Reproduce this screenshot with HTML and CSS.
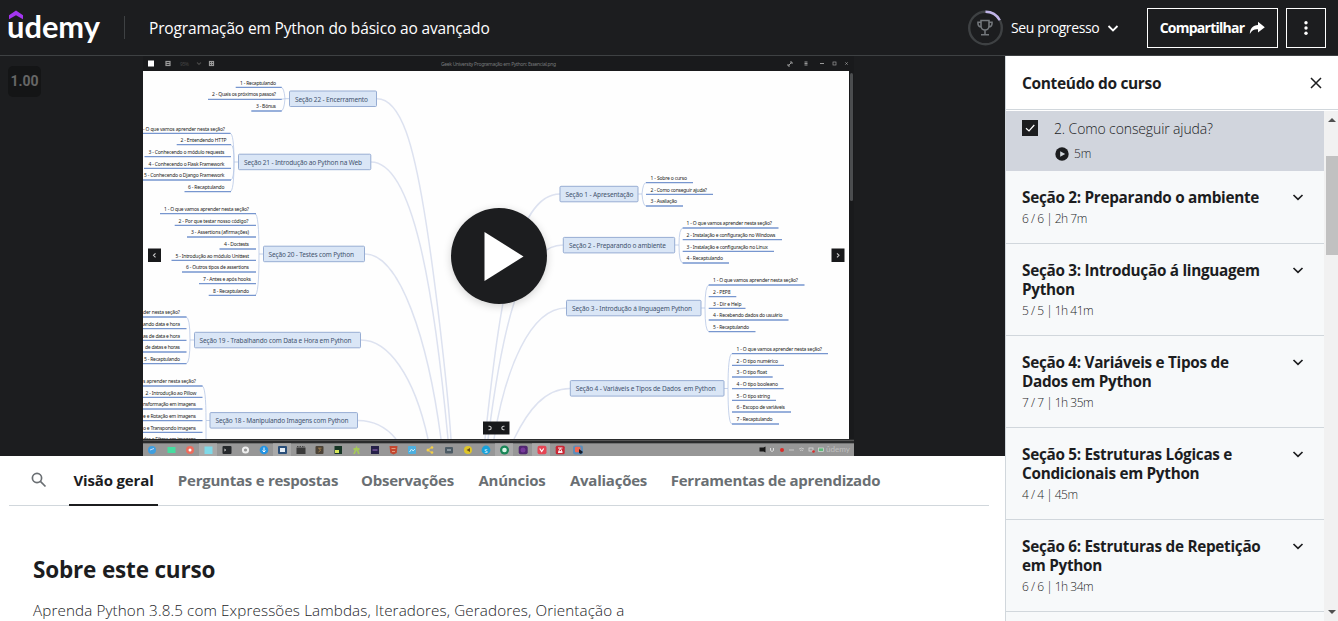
FILE: index.html
```html
<!DOCTYPE html>
<html lang="pt-BR">
<head>
<meta charset="utf-8">
<title>Programação em Python do básico ao avançado</title>
<link rel="stylesheet" href="styles.css">
</head>
<body>
<header class="topbar">
  <svg class="logo" width="94" height="40" viewBox="0 0 94 40" role="img" aria-label="udemy">
    <path d="M1 7.300 8 2.400 15 7.300V11.300L8 7.300 1 11.300Z" fill="#a435f0"/>
    <text x="-1" y="30" textLength="93" lengthAdjust="spacingAndGlyphs" class="wordmark">udemy</text>
  </svg>
  <span class="rule"></span>
  <h1 class="course">Programação em Python do básico ao avançado</h1>
  <div class="progress">
    <svg width="36" height="36" viewBox="0 0 36 36" fill="none">
      <circle cx="17.500" cy="18" r="16.300" stroke="#3e4143" stroke-width="2.400"/>
      <path d="M17.500 1.700A16.300 16.300 0 0 1 31.800 10.200" stroke="#c0b4e8" stroke-width="2.400"/>
      <path d="M13 10.500h8v5.500a4 4 0 0 1-8 0ZM13 12.200h-3v1.600a3.200 3.200 0 0 0 3.300 3.200M21 12.200h3v1.600a3.200 3.200 0 0 1-3.300 3.200M17 20v4.500M13 24.800h8" stroke="#73777b" stroke-width="1.600"/>
    </svg>
    <span class="progress-label">Seu progresso</span>
    <svg width="12" height="12" viewBox="0 0 12 12" fill="none" stroke="#fff" stroke-width="1.800"><path d="M1.500 4 6 8.500 10.500 4"/></svg>
  </div>
  <button class="btn share"><span>Compartilhar</span>
    <svg width="16" height="14" viewBox="0 0 16 14" fill="#fff"><path d="M9 .8 15.800 6.200 9 11.600V8.300C5.500 8 3 9 .8 13 1 7.500 4 4.200 9 4Z"/></svg>
  </button>
  <button class="btn more" aria-label="Mais"><svg width="6" height="16" viewBox="0 0 6 16" fill="#fff"><circle cx="3" cy="2.700" r="1.700"/><circle cx="3" cy="8" r="1.700"/><circle cx="3" cy="13.300" r="1.700"/></svg></button>
</header>

<main class="page">
  <div class="left">
    <section class="player">
      <div class="speed">1.00</div>
      <svg class="video" width="711" height="400" viewBox="143 56 711 400">
        <rect x="143" y="56" width="711" height="400" fill="#191a1c"/>
        <g fill="#fff"><rect x="148" y="60.500" width="6" height="6"/></g>
        <g fill="none" stroke="#999" stroke-width="1.200"><rect x="166" y="61.500" width="4" height="4"/><path d="M166 63.500h4"/><rect x="209.500" y="61.500" width="4" height="4"/><path d="M211.500 61v5M209.500 63.500h4"/><path d="M197 62.500l2 2 2-2" stroke="#444"/></g>
        <text x="180" y="65.500" class="tiny" textLength="9" fill="#444">95%</text>
        <text x="441" y="65.500" class="tiny" textLength="115" fill="#77797b">Geek University Programação em Python: Essencial.png</text>
        <g fill="none" stroke="#999" stroke-width="1"><path d="M788.500 65.500l3-3M790 62h2v2M788 64v2h2M804.500 62h3M804.500 63.500h3M804.500 65h3M820 63.500h4" /><path d="M845.500 62.500l2 2M847.500 62.500l-2 2"/><rect x="833" y="62" width="3" height="3" stroke-width=".7"/></g>
        <rect x="143" y="71" width="706" height="368" fill="#fefefe"/>
        <rect x="850" y="73" width="3" height="128" rx="1.500" fill="#4b4d4f"/>

        <g fill="none" stroke="#dde2f0" stroke-width="1.500">
          <path d="M377 98.700C402 98.700 414 150 424 210S447 380 451 439"/>
          <path d="M371 162C413 162 434 290 448 439"/>
          <path d="M365 254C400 254 428 340 441 439"/>
          <path d="M361 340C388 340 414 375 428 439"/>
          <path d="M358 420.500C374 420.500 387 428 396 439"/>
          <path d="M560 194C515 194 500 300 485 439"/>
          <path d="M563 245C520 245 502 330 488 439"/>
          <path d="M566 308C530 308 505 370 494 439"/>
          <path d="M570 388.500C545 388.500 528 410 514 439"/>
        </g>
        <g fill="none" stroke="#b7c8e6" stroke-width=".8">
          <path d="M289 98.700h-4q-1-11.400-4-11.400M285 98.700q-1 12.300-4 12.300M285 98.700l-4 .6"/>
          <path d="M238 162h-4q0-28.700-4-28.700M234 162q0 29.700-4 29.700M234 162q0-17-3-17.300M234 162q0 17-3 18"/>
          <path d="M263 254h-4q0-40-4-40.300M259 254q0 41-4 41.300"/>
          <path d="M194 340h-4q0-23-4-23M190 340q0 23.700-4 23.700"/>
          <path d="M210 420.500h-4q0-34.500-4-34.500M206 420.500v18.500"/>
          <path d="M638 194h4q1-11.300 4-11.300M642 194q1 12 4 12"/>
          <path d="M675 245h4q0-17 4-17M679 245q0 18 4 18"/>
          <path d="M701 308h4q0-23 4-23M705 308q0 23.700 4 23.700"/>
          <path d="M724 388.500h4q0-34.800 4-34.800M728 388.500q0 35.500 4 35.500"/>
        </g>
        <path fill="none" stroke="#7796cf" stroke-width="1.300" d="M235.700 87.300H281.700M208 99.300h73.700M251.300 111h30.400M143 133.300h87.500M176.700 144.700H231M144.500 156.700H231M144 168.300h87M143 180h88M184.500 191.700H231M160 213.700h96M174.700 225.300H256M187 237h69M219.500 249H256M171.500 260.300H256M182 272h74M199 283.700h57M208.700 295.300H256M143 317h43.500M143 328.700h43.500M143 340.300h43.500M143 352h43.500M143 363.700h43.500M143 386h59.500M143 397.300h59.500M143 409h59.500M143 420.700h59.500M143 432.300h59.500M646 182.700h47M646 194.300h67M646 206h37M682.700 228h95.800M682.700 239.700H782M682.700 251.300H774M682.700 263H729M708.700 285h95.800M708.700 296.700h27.600M708.700 308.300h36.800M708.700 320h79.800M708.700 331.700h46.800M732 353.700h96M732 365.300h52M732 377h40.700M732 388.700h51.700M732 400.300h44M732 412h59M732 424h47"/>
        <g fill="#dae6f6" stroke="#97add3" stroke-width="1">
          <rect x="289.500" y="91" width="87" height="15.500" rx="1"/><rect x="238.500" y="154.200" width="132.300" height="15.500" rx="1"/><rect x="263.500" y="246.200" width="101" height="15.500" rx="1"/><rect x="194.500" y="332.300" width="166" height="15.500" rx="1"/><rect x="210" y="412.600" width="147.500" height="15.500" rx="1"/><rect x="560" y="186.300" width="78" height="15.500" rx="1"/><rect x="563.300" y="237.400" width="111.400" height="15.500" rx="1"/><rect x="566.500" y="300.300" width="134.500" height="15.500" rx="1"/><rect x="570.300" y="380.600" width="153.700" height="15.500" rx="1"/>
        </g>
        <g class="node">
          <text x="295" y="101.500" textLength="73">Seção 22 - Encerramento</text>
          <text x="244" y="164.500" textLength="118">Seção 21 - Introdução ao Python na Web</text>
          <text x="268.500" y="256.500" textLength="85.500">Seção 20 - Testes com Python</text>
          <text x="199.500" y="342.700" textLength="152">Seção 19 - Trabalhando com Data e Hora em Python</text>
          <text x="215.500" y="423" textLength="133">Seção 18 - Manipulando Imagens com Python</text>
          <text x="565.500" y="196.700" textLength="68">Seção 1 - Apresentação</text>
          <text x="569" y="247.700" textLength="97">Seção 2 - Preparando o ambiente</text>
          <text x="572" y="310.700" textLength="120">Seção 3 - Introdução á linguagem Python</text>
          <text x="575.700" y="391" textLength="140">Seção 4 - Variáveis e Tipos de Dados&nbsp; em Python</text>
        </g>
        <g class="leaf">
          <text x="240" y="84.700" textLength="36">1 - Recaptulando</text>
          <text x="212" y="96.400" textLength="64">2 - Quais os próximos passos?</text>
          <text x="256" y="108.100" textLength="20">3 - Bônus</text>
          <text x="143" y="130.500" textLength="82">- O que vamos aprender nesta seção?</text>
          <text x="180.500" y="142" textLength="46">2 - Entendendo HTTP</text>
          <text x="148.500" y="153.900" textLength="76">3 - Conhecendo o módulo requests</text>
          <text x="148.500" y="165.500" textLength="76">4 - Conhecendo o Flask Framework</text>
          <text x="144" y="177.200" textLength="80.500">5 - Conhecendo o Django Framework</text>
          <text x="188" y="188.900" textLength="36.500">6 - Recaptulando</text>
          <text x="164" y="211" textLength="85">1 - O que vamos aprender nesta seção?</text>
          <text x="178.500" y="222.600" textLength="70">2 - Por que testar nosso código?</text>
          <text x="191" y="234.300" textLength="58">3 - Assertions (afirmações)</text>
          <text x="224" y="246" textLength="25">4 - Doctests</text>
          <text x="175.500" y="257.600" textLength="73.500">5 - Introdução ao módulo Unittest</text>
          <text x="186" y="269.200" textLength="63">6 - Outros tipos de assertions</text>
          <text x="203" y="281" textLength="48">7 - Antes e após hooks</text>
          <text x="213" y="292.600" textLength="36">8 - Recaptulando</text>
          <text x="143" y="314.200" textLength="37">der nesta seção?</text>
          <text x="143" y="326" textLength="37">ando data e hora</text>
          <text x="143" y="337.600" textLength="37">as de data e hora</text>
          <text x="145" y="349.300" textLength="35">de datas e horas</text>
          <text x="144" y="361" textLength="36">5 - Recaptulando</text>
          <text x="143" y="383" textLength="53">s aprender nesta seção?</text>
          <text x="145.500" y="394.600" textLength="51">2 - Introdução ao Pillow</text>
          <text x="143" y="406.300" textLength="53">nsformação em imagens</text>
          <text x="143" y="418" textLength="53">e e Rotação em imagens</text>
          <text x="143" y="429.600" textLength="53">o e Transpondo imagens</text>
          <text x="143" y="441" textLength="53">des e Filtros em imagens</text>
          <text x="650.500" y="180" textLength="36.500">1 - Sobre o curso</text>
          <text x="650.500" y="191.600" textLength="56.500">2 - Como conseguir ajuda?</text>
          <text x="650.500" y="203.300" textLength="26.500">3 - Avaliação</text>
          <text x="686.500" y="225.300" textLength="85.500">1 - O que vamos aprender nesta seção?</text>
          <text x="686.500" y="237" textLength="89">2 - Instalação e configuração no Windows</text>
          <text x="686.500" y="248.600" textLength="81.500">3 - Instalação e configuração no Linux</text>
          <text x="686.500" y="260.300" textLength="36.500">4 - Recaptulando</text>
          <text x="713" y="282.300" textLength="85">1 - O que vamos aprender nesta seção?</text>
          <text x="713" y="294" textLength="17.500">2 - PEP8</text>
          <text x="713" y="305.600" textLength="28.500">3 - Dir e Help</text>
          <text x="713" y="317.300" textLength="69.500">4 - Recebendo dados do usuário</text>
          <text x="713" y="329" textLength="36">5 - Recaptulando</text>
          <text x="736.500" y="351" textLength="85.500">1 - O que vamos aprender nesta seção?</text>
          <text x="736.500" y="362.600" textLength="41.500">2 - O tipo numérico</text>
          <text x="736.500" y="374.300" textLength="30.500">3 - O tipo float</text>
          <text x="736.500" y="386" textLength="41.500">4 - O tipo booleano</text>
          <text x="736.500" y="397.700" textLength="33.500">5 - O tipo string</text>
          <text x="736.500" y="409.300" textLength="48.500">6 - Escopo de variáveis</text>
          <text x="736.500" y="421.200" textLength="36">7 - Recaptulando</text>
        </g>

        <g fill="#18191b"><rect x="148" y="248.500" width="13" height="13.500"/><rect x="831.500" y="248.500" width="13" height="13.500"/><rect x="483" y="421.500" width="26.500" height="13"/></g>
        <g fill="none" stroke="#ccc" stroke-width="1.100"><path d="M155.500 253.300l-2 2 2 2M837 253.300l2 2-2 2"/><path d="M488.500 426.300h1a1.700 1.700 0 0 1 0 3.400h-1M504.500 426.300h-1a1.700 1.700 0 0 0 0 3.400h1"/></g>

        <rect x="143" y="439" width="711" height="4.500" fill="#2a2b2c"/>
        <path d="M143 440.500h711" stroke="#555" stroke-width="1"/>
        <rect x="143" y="443.300" width="711" height="12.700" fill="#979797"/>
        <g fill="#a9a9a9"><rect x="199" y="443.300" width="18" height="12.700"/><rect x="273" y="443.300" width="18" height="12.700"/><rect x="495" y="443.300" width="18" height="12.700"/><rect x="532" y="443.300" width="18" height="12.700"/></g>
        <circle cx="152" cy="450" r="4" fill="#3f9fe0"/><path d="M150 450l4-1.500" stroke="#cdf"/>
        <rect x="167.500" y="447" width="8" height="6" fill="#46dda0"/>
        <circle cx="190" cy="450" r="4" fill="#ee6c5d"/><circle cx="190" cy="450" r="1.500" fill="#fff"/>
        <rect x="204.500" y="446.500" width="8" height="7.500" fill="#7fd9e8"/>
        <rect x="222.500" y="446" width="9" height="8" rx="1" fill="#25282b"/><path d="M224 449l2 1-2 1" stroke="#ddd" stroke-width=".7" fill="none"/>
        <circle cx="245.500" cy="450" r="2.600" stroke="#eee" stroke-width="2" fill="none"/>
        <circle cx="264" cy="450" r="4.300" fill="#2494e3"/><path d="M264 447.500v4M262.500 450.500l1.500 1.500 1.500-1.500" stroke="#fff" fill="none"/>
        <rect x="278" y="446" width="9" height="8" rx="1" fill="#294e79"/><rect x="280" y="448" width="5" height="4" fill="#e5edf5"/>
        <rect x="296.500" y="447.500" width="9" height="6.500" fill="#393939"/><path d="M297 446.500h8" stroke="#444" stroke-dasharray="1.500 1"/>
        <rect x="315.500" y="446" width="8" height="8" rx="1" fill="#4b4236"/><path d="M321.500 448.200h-3l2.200 2-2.200 1.800" stroke="#b58a50" stroke-width=".8" fill="none"/>
        <rect x="334.500" y="446" width="7.500" height="8" fill="#163625"/><path d="M335 450h4v3h-4z" fill="#d8e75a"/>
        <path d="M354 454l2.500-6 2.500 6M353.500 449h6" stroke="#a4c957" stroke-width="1.800" fill="none"/>
        <rect x="371" y="446" width="8" height="8" fill="#252048"/><path d="M372.500 450h5" stroke="#a06fc5"/>
        <path d="M389.500 446h8l-.8 7-3.200 1.500-3.200-1.500Z" fill="#c4472f"/><path d="M391.500 448.500h4M392 451.500h3" stroke="#eec0a0" stroke-width=".7"/>
        <rect x="408" y="446" width="8" height="8" rx="1" fill="#4eb0e0"/><path d="M409.500 452l2-3 1.500 2 2-2" stroke="#c5edff" fill="none"/>
        <path d="M428 450l4-3M428 450l4 3" stroke="#f5cf45" stroke-width="1"/><g fill="#f5cf45"><circle cx="428" cy="450" r="1.500"/><circle cx="432" cy="447.500" r="1.300"/><circle cx="432" cy="452.500" r="1.300"/></g>
        <rect x="445" y="447" width="8" height="6.500" rx="1" fill="#4c5b65"/><path d="M447 450h4" stroke="#c5d1d9"/>
        <circle cx="468" cy="450" r="4" fill="#dfc627"/><path d="M466.500 450l3.500-2v4Z" fill="#6c5018"/>
        <circle cx="486" cy="450" r="4.400" fill="#19a2da"/><text x="484.300" y="452.500" font-size="6" fill="#fff" font-family="Open Sans">S</text>
        <circle cx="504.500" cy="450" r="4.500" fill="#198657"/><circle cx="504.500" cy="450" r="2.300" fill="#d8f6e7"/>
        <rect x="518.700" y="445.700" width="9" height="8.500" rx="2" fill="#512671"/><circle cx="523" cy="450" r="2.500" fill="#773a9b"/>
        <rect x="537.500" y="445.700" width="9" height="8.500" rx="2" fill="#e64554"/><path d="M539.700 448.500l2 3 2-3" stroke="#fff" stroke-width="1.200" fill="none"/>
        <rect x="555.700" y="445.700" width="9" height="8.500" rx="1.500" fill="#cb2634"/><path d="M558 448h4.500M558 452.500h4.500M560.300 448.500l-1.800 3h3.600Z" stroke="#fff" stroke-width=".9" fill="none"/>
        <rect x="573" y="445.500" width="10" height="9" rx="2" fill="#5b8dba"/><rect x="575" y="446.700" width="5.500" height="5.500" rx="1" fill="#f26651"/><path d="M579 449l4 3-2 2-2-1Z" fill="#151d2b"/>
        <path d="M759.500 447.500h4l2-1v6l-2-1h-4Z" fill="#171717"/>
        <path d="M770.500 448v2.500q1.500 2 3 0V448" stroke="#ddd" fill="none"/><circle cx="782" cy="450" r="2" fill="#db2b28"/>
        <path d="M789 450h5M799 449q2.500-2 5 0M800 450.500q1.500-1 3 0" stroke="#c8c8c8" fill="none"/><rect x="809" y="448" width="4" height="3" stroke="#ddd" fill="none" stroke-width=".8"/><circle cx="813.500" cy="451.500" r="1.300" fill="#db2b28"/>
        <rect x="818.500" y="448" width="5" height="3.500" fill="#5cb879" stroke="#ddd" stroke-width=".7"/>
        <text x="826" y="451.500" font-size="8" fill="#c0c0c0" font-family="Lato" textLength="24" lengthAdjust="spacingAndGlyphs">ûdemy</text>
      </svg>
      <button class="play" aria-label="Reproduzir"><svg width="96" height="96" viewBox="0 0 96 96"><path d="M33.500 24v49l39-24.500Z" fill="#fff"/></svg></button>
    </section>

    <nav class="tabs">
      <svg class="search" width="16" height="16" viewBox="0 0 16 16" fill="none" stroke="#6a6f73" stroke-width="1.700"><circle cx="6" cy="6" r="4.600"/><path d="M9.400 9.400 14.500 14.500"/></svg>
      <a class="tab t1 active">Visão geral</a><a class="tab t2">Perguntas e respostas</a><a class="tab t3">Observações</a><a class="tab t4">Anúncios</a><a class="tab t5">Avaliações</a><a class="tab t6">Ferramentas de aprendizado</a>
    </nav>
    <section class="about">
      <h2>Sobre este curso</h2>
      <p>Aprenda Python 3.8.5 com Expressões Lambdas, Iteradores, Geradores, Orientação a</p>
    </section>
  </div>

  <aside class="sidebar">
    <div class="side-head"><h2>Conteúdo do curso</h2>
      <svg width="12" height="12" viewBox="0 0 12 12" stroke="#1c1d1f" stroke-width="1.500"><path d="M1 1l10 10M11 1 1 11"/></svg></div>
    <div class="side-body">
      <div class="list">
        <div class="lesson">
          <svg class="check" width="16" height="16" viewBox="0 0 16 16"><path d="M0 0h16v16H0Z" fill="#1c1d1f"/><path d="M4 8.300 7 11l5.300-6" fill="none" stroke="#fff" stroke-width="1.200"/></svg>
          <div class="lesson-info"><span class="lesson-title">2. Como conseguir ajuda?</span>
            <span class="dur"><svg width="14" height="14" viewBox="0 0 14 14"><circle cx="7" cy="7" r="6.700" fill="#1c1d1f"/><path d="M5.200 4.300v5.400l5-2.700Z" fill="#d1d7dc"/></svg>5m</span></div>
        </div>
        <div class="sec s2"><div><h3>Seção 2: Preparando o ambiente</h3><p>6 / 6 | 2h 7m</p></div><svg class="chev" viewBox="0 0 12 12"><path d="M1.500 4 6 8.300 10.500 4"/></svg></div>
        <div class="sec"><div><h3>Seção 3: Introdução á linguagem<br>Python</h3><p>5 / 5 | 1h 41m</p></div><svg class="chev" viewBox="0 0 12 12"><path d="M1.500 4 6 8.300 10.500 4"/></svg></div>
        <div class="sec"><div><h3>Seção 4: Variáveis e Tipos de<br>Dados em Python</h3><p>7 / 7 | 1h 35m</p></div><svg class="chev" viewBox="0 0 12 12"><path d="M1.500 4 6 8.300 10.500 4"/></svg></div>
        <div class="sec"><div><h3>Seção 5: Estruturas Lógicas e<br>Condicionais em Python</h3><p>4 / 4 | 45m</p></div><svg class="chev" viewBox="0 0 12 12"><path d="M1.500 4 6 8.300 10.500 4"/></svg></div>
        <div class="sec"><div><h3>Seção 6: Estruturas de Repetição<br>em Python</h3><p>6 / 6 | 1h 34m</p></div><svg class="chev" viewBox="0 0 12 12"><path d="M1.500 4 6 8.300 10.500 4"/></svg></div>
      </div>
      <div class="scroll"><span class="up"></span><span class="thumb"></span><span class="down"></span></div>
    </div>
  </aside>
</main>
</body>
</html>
```
FILE: styles.css
```css
* { box-sizing: border-box; margin: 0; padding: 0; }
body { width: 1338px; height: 621px; overflow: hidden; background: #fff; color: #1c1d1f; font-family: "Open Sans", "Noto Sans", sans-serif; font-size: 14px; }
h1, h2, h3 { font-size: inherit; white-space: nowrap; }
p, span, a { white-space: nowrap; }
.topbar { height: 56px; background: #1c1d1f; border-bottom: 1px solid #3e4143; display: flex; align-items: center; padding: 0 12px 0 8px; color: #fff; }
.wordmark { font: 700 30px Lato, sans-serif; fill: #fff; }
.rule { width: 1px; height: 23px; background: #3e4143; margin-left: 22px; }
.course { font-size: 15.5px; font-weight: 400; margin-left: 24px; width: 819px; letter-spacing: -.15px; }
.progress { display: flex; align-items: center; gap: 7px; width: 179px; }
.progress-label { width: 89px; font-size: 14px; letter-spacing: -.4px; }
.btn { height: 40px; border: 1px solid #fff; background: none; color: #fff; display: flex; align-items: center; justify-content: center; font: 700 14px "Open Sans", sans-serif; }
.share { width: 131px; gap: 5px; letter-spacing: -.75px; }
.more { width: 40px; margin-left: 8px; }
.page { display: flex; height: 565px; }
.left { width: 1005px; }
.player { position: relative; height: 400px; background: #1c1d1f; padding-left: 143px; }
.video { display: block; }
.speed { position: absolute; left: 8px; top: 10px; width: 33px; height: 31px; border-radius: 5px; background: #141516; color: #666; font: 700 14px/31px Roboto, sans-serif; text-align: center; }
.play { position: absolute; left: 451px; top: 152px; width: 96px; height: 96px; border: 0; border-radius: 50%; background: #1c1d1f; box-shadow: 0 2px 8px rgba(0,0,0,.18); }
.play svg { display: block; }
.tiny { font: 5px "Noto Sans", sans-serif; }
.node { font: 6.500px "Noto Sans", sans-serif; fill: #43536f; }
.leaf { font: 5px "Noto Sans", sans-serif; fill: #222; }
.tabs { display: flex; height: 50px; margin: 0 16px 0 9px; border-bottom: 1px solid #d1d7dc; }
.search { margin: 16px 22px 0; }
.tab { height: 50px; line-height: 49px; margin-right: 16px; text-align: center; color: #6a6f73; font-size: 15px; font-weight: 700; letter-spacing: -.24px; }
.tab.active { color: #1c1d1f; border-bottom: 2px solid #1c1d1f; letter-spacing: -.15px; }
.t1 { width: 89px; } .t2 { width: 168px; margin-right: 15px; } .t3 { width: 101px; } .t4 { width: 76px; } .t5 { width: 85px; } .t6 { width: 217px; }
.about { padding: 48px 24px 0 33px; }
.about h2 { font-size: 22.5px; line-height: 32px; letter-spacing: -.17px; }
.about p { margin-top: 13px; font-size: 15.200px; line-height: 22px; font-weight: 300; letter-spacing: .13px; }
.sidebar { width: 333px; border-left: 1px solid #d1d7dc; display: flex; flex-direction: column; }
.side-head { height: 54px; display: flex; align-items: center; justify-content: space-between; padding: 0 16px; border-bottom: 1px solid #d1d7dc; }
.side-head h2 { font-size: 15.500px; letter-spacing: -.35px; }
.side-body { display: flex; flex: 1; overflow: hidden; padding-top: 1px; }
.list { width: 318px; background: #f7f9fa; }
.lesson { height: 60px; background: #d1d5dd; padding: 9px 16px; display: flex; gap: 16px; }
.lesson-info { display: flex; flex-direction: column; }
.lesson-title { font-size: 14px; line-height: 17px; font-weight: 300; letter-spacing: -.12px; }
.dur { display: flex; gap: 5px; align-items: center; font-size: 12px; line-height: 16px; margin: 9px 0 0 1px; font-weight: 300; }
.sec { height: 92px; padding: 17px 20px 0 16px; border-bottom: 1px solid #d1d7dc; display: flex; justify-content: space-between; }
.s2 { height: 73px; }
.sec h3 { font-size: 15.300px; line-height: 19px; letter-spacing: -.29px; }
.sec p { font-size: 12px; line-height: 16px; margin-top: 4px; font-weight: 300; letter-spacing: -.5px; }
.chev { width: 12px; height: 12px; margin-top: 3px; fill: none; stroke: #1c1d1f; stroke-width: 1.700; }
.scroll { width: 14px; background: #f1f1f1; display: flex; flex-direction: column; align-items: flex-end; padding: 7px 0; }
.up, .down { border: 4px solid transparent; margin-right: 2px; width: 8px; height: 4px; }
.up { border-top: 0; border-bottom-color: #505050; }
.down { border-bottom: 0; border-top-color: #505050; margin-top: auto; }
.thumb { width: 12px; height: 99px; background: #c1c1c1; margin-top: 34px; }
```
